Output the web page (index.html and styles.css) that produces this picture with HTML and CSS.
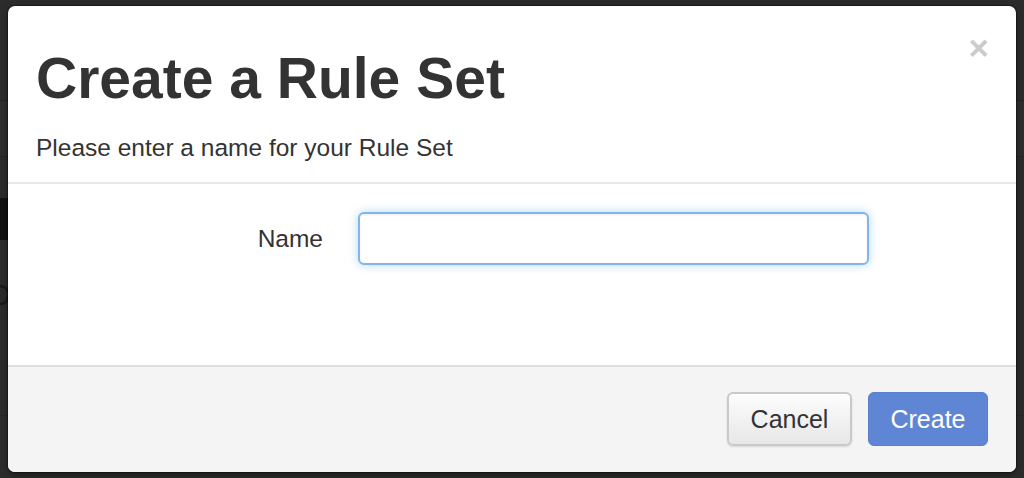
FILE: index.html
```html
<!DOCTYPE html>
<html>
<head>
<meta charset="utf-8">
<link rel="stylesheet" href="styles.css">
</head>
<body>
<div class="page">
  <div class="band band-top"></div>
  <div class="band band-block"></div>
  <svg class="ghost-shape" width="8" height="24" viewBox="0 0 8 24"><path d="M0 3 C6 3 8 8 8 12 C8 17 6 21 0 21" fill="none" stroke="#1a1a1a" stroke-width="2.5"/></svg>
  <div class="band band-low"></div>
</div>
<div class="modal">
  <div class="modal-header">
    <button class="close" type="button">×</button>
    <h1 class="title">Create a Rule Set</h1>
    <p class="subtitle">Please enter a name for your Rule Set</p>
  </div>
  <div class="modal-body">
    <div class="field">
      <label class="field-label" for="name">Name</label>
      <input class="field-input" id="name" type="text">
    </div>
  </div>
  <div class="modal-footer">
    <button class="btn btn-default" type="button">Cancel</button>
    <button class="btn btn-primary" type="button">Create</button>
  </div>
</div>
</body>
</html>
```
FILE: styles.css
```css
html, body {
  margin: 0;
  padding: 0;
  height: 100%;
}
body {
  background: #2c2c2c;
  font-family: "Liberation Sans", Arial, Helvetica, sans-serif;
  color: #333;
  overflow: hidden;
  position: relative;
}
.page {
  position: absolute;
  inset: 0;
}
.band {
  position: absolute;
  left: 0;
  right: 0;
}
.band-top {
  top: 100px;
  height: 55px;
  background: #2e2e2e;
  border-top: 1px solid #262626;
  border-bottom: 1px solid #262626;
}
.band-block {
  top: 198px;
  height: 42px;
  left: 0;
  right: auto;
  width: 8px;
  background: #111;
}
.ghost-shape {
  position: absolute;
  left: 0;
  top: 283px;
}
.band-low {
  top: 415px;
  height: 1px;
  background: #262626;
}
.modal {
  position: absolute;
  left: 8px;
  top: 6px;
  width: 1008px;
  height: 466px;
  background: #fff;
  border-radius: 7px;
  box-shadow: 0 0 0 1px rgba(0,0,0,0.35), 0 3px 8px rgba(0,0,0,0.4);
  display: flex;
  flex-direction: column;
  overflow: hidden;
}
.modal-header {
  position: relative;
  flex: none;
  padding: 40px 28px 0 28px;
  height: 178px;
  box-sizing: border-box;
  border-bottom: 2px solid #e8e8e8;
}
.close {
  position: absolute;
  right: 27px;
  top: 24px;
  background: none;
  border: 0;
  padding: 0;
  font-family: "Liberation Sans", Arial, sans-serif;
  font-weight: bold;
  font-size: 35px;
  line-height: 1;
  color: #000;
  opacity: 0.2;
}
.title {
  margin: 0;
  font-size: 57px;
  font-weight: bold;
  line-height: 64px;
  color: #333;
}
.subtitle {
  margin: 23px 0 0 0;
  font-size: 24.5px;
  line-height: 30px;
  color: #333;
}
.modal-body {
  flex: 1;
  padding: 28px 28px 0 28px;
}
.field {
  display: flex;
  align-items: center;
}
.field-label {
  flex: none;
  width: 287px;
  padding-right: 35px;
  text-align: right;
  font-size: 24.5px;
  color: #333;
}
.field-input {
  width: 511px;
  height: 53px;
  box-sizing: border-box;
  border: 2px solid #84b5e8;
  border-radius: 6px;
  background: #fff;
  outline: none;
  box-shadow: inset 0 1px 2px rgba(0,0,0,0.08), 0 0 10px rgba(82,168,236,0.45);
  font-size: 24px;
  padding: 0 12px;
}
.modal-footer {
  flex: none;
  height: 107px;
  box-sizing: border-box;
  background: #f4f4f4;
  border-top: 2px solid #dedede;
  display: flex;
  justify-content: flex-end;
  align-items: flex-start;
  gap: 16px;
  padding: 25px 28px 0 0;
}
.btn {
  height: 54px;
  border-radius: 6px;
  font-family: "Liberation Sans", Arial, sans-serif;
  font-size: 25px;
  padding: 0;
  box-sizing: border-box;
}
.btn-default {
  width: 125px;
  color: #333;
  background: linear-gradient(#fdfdfd, #e7e7e7);
  border: 2px solid #c9c9c9;
  box-shadow: 0 1px 2px rgba(0,0,0,0.12);
}
.btn-primary {
  width: 120px;
  color: #fff;
  background: #5f86d5;
  border: 1px solid #5a80cc;
}
```
